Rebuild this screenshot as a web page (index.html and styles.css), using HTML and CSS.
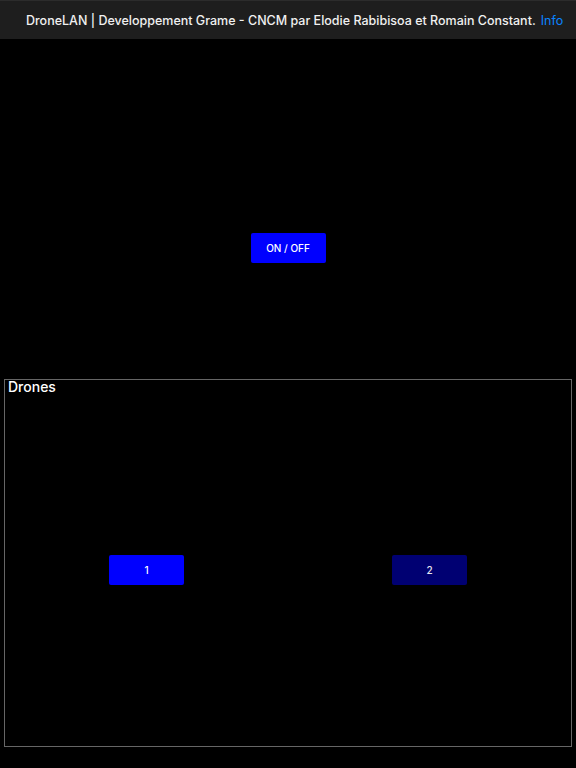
FILE: index.html
```html
<!DOCTYPE html>
<html lang="fr">
<head>
<meta charset="utf-8">
<title>DroneLAN</title>
<link rel="stylesheet" href="styles.css">
</head>
<body>
<header class="topbar">
  <span class="title">DroneLAN | Developpement Grame - CNCM par Elodie Rabibisoa et Romain Constant.</span>
  <a class="info" href="#">Info</a>
</header>
<main class="main">
  <section class="power">
    <button class="btn btn-on">ON / OFF</button>
  </section>
  <section class="drones">
    <h2 class="drones-title">Drones</h2>
    <div class="drones-grid">
      <div class="cell"><button class="btn btn-active">1</button></div>
      <div class="cell"><button class="btn btn-dim">2</button></div>
    </div>
  </section>
</main>
</body>
</html>
```
FILE: styles.css
```css
html, body {
  margin: 0;
  padding: 0;
  background: #000;
  height: 100%;
}
body {
  font-family: Inter, "Noto Sans", sans-serif;
  color: #fff;
  display: flex;
  flex-direction: column;
}
.topbar {
  height: 39px;
  box-sizing: border-box;
  background: #1e1e1e;
  border-top: 1px solid #2c2c2c;
  display: flex;
  align-items: center;
  padding-left: 26px;
  gap: 5px;
  font-size: 12.5px;
  font-weight: 500;
  white-space: nowrap;
}
.title {
  color: #f0f0f0;
}
.info {
  color: #0a84ff;
  text-decoration: none;
  font-weight: 400;
}
.main {
  flex: 1;
  display: flex;
  flex-direction: column;
}
.power {
  height: 340px;
  display: flex;
  justify-content: center;
  align-items: flex-start;
  padding-top: 194px;
  box-sizing: border-box;
}
.btn {
  width: 75px;
  height: 30px;
  border: none;
  border-radius: 2px;
  color: #fff;
  font-family: Inter, "Noto Sans", sans-serif;
  font-size: 10px;
  font-weight: 500;
  padding: 0;
}
.btn-on, .btn-active {
  background: #0000ff;
}
.btn-dim {
  background: #000072;
  color: #e8e8f0;
}
.drones {
  margin: 0 4px;
  height: 368px;
  box-sizing: border-box;
  border: 1px solid #666;
  display: flex;
  flex-direction: column;
}
.drones-title {
  margin: 0;
  padding: 0 3px;
  font-size: 14px;
  font-weight: 500;
  line-height: 14px;
  color: #fff;
}
.drones-grid {
  flex: 1;
  display: grid;
  grid-template-columns: 1fr 1fr;
}
.cell {
  display: flex;
  justify-content: center;
  align-items: center;
}
```
